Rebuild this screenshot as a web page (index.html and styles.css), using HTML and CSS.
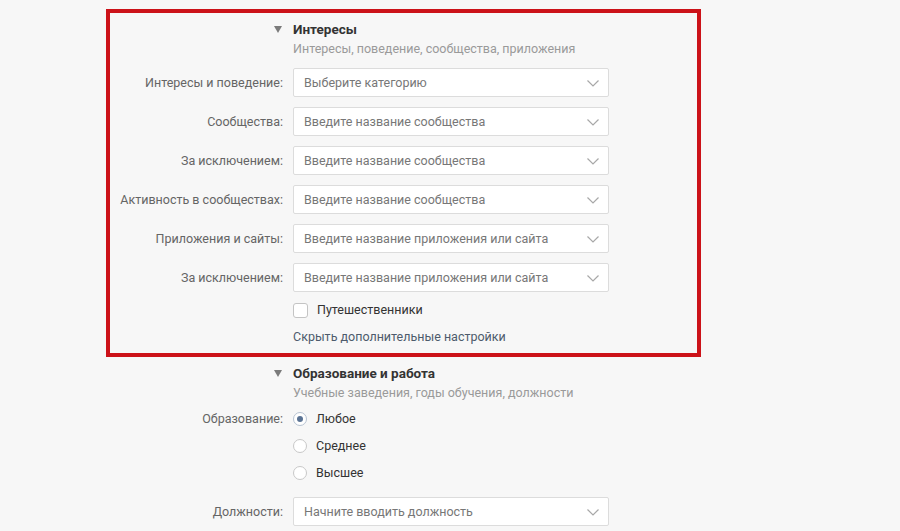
FILE: index.html
```html
<!DOCTYPE html>
<html lang="ru">
<head>
<meta charset="utf-8">
<title>Интересы</title>
<link rel="stylesheet" href="styles.css">
</head>
<body>
<div class="page">
  <section class="block highlight">
    <div class="row head">
      <div class="label"><svg class="tri" width="8" height="7" viewBox="0 0 8 7"><path d="M0 0H8L4 7Z" fill="#7b7b7b"/></svg></div>
      <div class="control">
        <div class="title">Интересы</div>
        <div class="sub">Интересы, поведение, сообщества, приложения</div>
      </div>
    </div>
    <div class="row field">
      <div class="label">Интересы и поведение:</div>
      <div class="control"><div class="select"><span>Выберите категорию</span><svg class="chev" width="12" height="7" viewBox="0 0 12 7"><path d="M0.5 0.5L6 6L11.5 0.5" fill="none" stroke="#a8a8a8" stroke-width="1.2"/></svg></div></div>
    </div>
    <div class="row field">
      <div class="label">Сообщества:</div>
      <div class="control"><div class="select"><span>Введите название сообщества</span><svg class="chev" width="12" height="7" viewBox="0 0 12 7"><path d="M0.5 0.5L6 6L11.5 0.5" fill="none" stroke="#a8a8a8" stroke-width="1.2"/></svg></div></div>
    </div>
    <div class="row field">
      <div class="label">За исключением:</div>
      <div class="control"><div class="select"><span>Введите название сообщества</span><svg class="chev" width="12" height="7" viewBox="0 0 12 7"><path d="M0.5 0.5L6 6L11.5 0.5" fill="none" stroke="#a8a8a8" stroke-width="1.2"/></svg></div></div>
    </div>
    <div class="row field">
      <div class="label">Активность в сообществах:</div>
      <div class="control"><div class="select"><span>Введите название сообщества</span><svg class="chev" width="12" height="7" viewBox="0 0 12 7"><path d="M0.5 0.5L6 6L11.5 0.5" fill="none" stroke="#a8a8a8" stroke-width="1.2"/></svg></div></div>
    </div>
    <div class="row field">
      <div class="label">Приложения и сайты:</div>
      <div class="control"><div class="select"><span>Введите название приложения или сайта</span><svg class="chev" width="12" height="7" viewBox="0 0 12 7"><path d="M0.5 0.5L6 6L11.5 0.5" fill="none" stroke="#a8a8a8" stroke-width="1.2"/></svg></div></div>
    </div>
    <div class="row field">
      <div class="label">За исключением:</div>
      <div class="control"><div class="select"><span>Введите название приложения или сайта</span><svg class="chev" width="12" height="7" viewBox="0 0 12 7"><path d="M0.5 0.5L6 6L11.5 0.5" fill="none" stroke="#a8a8a8" stroke-width="1.2"/></svg></div></div>
    </div>
    <div class="row check">
      <div class="label"></div>
      <div class="control"><span class="box"></span><span class="opt">Путешественники</span></div>
    </div>
    <div class="row linkrow">
      <div class="label"></div>
      <div class="control"><span class="link">Скрыть дополнительные настройки</span></div>
    </div>
  </section>

  <section class="block plain">
    <div class="row head">
      <div class="label"><svg class="tri" width="8" height="7" viewBox="0 0 8 7"><path d="M0 0H8L4 7Z" fill="#7b7b7b"/></svg></div>
      <div class="control">
        <div class="title">Образование и работа</div>
        <div class="sub">Учебные заведения, годы обучения, должности</div>
      </div>
    </div>
    <div class="row radio first">
      <div class="label">Образование:</div>
      <div class="control"><span class="rad on"></span><span class="opt">Любое</span></div>
    </div>
    <div class="row radio">
      <div class="label"></div>
      <div class="control"><span class="rad"></span><span class="opt">Среднее</span></div>
    </div>
    <div class="row radio">
      <div class="label"></div>
      <div class="control"><span class="rad"></span><span class="opt">Высшее</span></div>
    </div>
    <div class="row field job">
      <div class="label">Должности:</div>
      <div class="control"><div class="select"><span>Начните вводить должность</span><svg class="chev" width="12" height="7" viewBox="0 0 12 7"><path d="M0.5 0.5L6 6L11.5 0.5" fill="none" stroke="#a8a8a8" stroke-width="1.2"/></svg></div></div>
    </div>
  </section>
</div>
</body>
</html>
```

FILE: styles.css
```css
* { box-sizing: border-box; }
html, body {
  margin: 0;
  background: #f7f7f7;
}
body {
  font-family: Roboto, "Open Sans", "Liberation Sans", sans-serif;
  font-size: 12.5px;
  color: #333;
  overflow: hidden;
  height: 531px;
}
.page {
  padding: 9px 0 0 106px;
}
.block {
  width: 595px;
  border: 4px solid transparent;
}
.highlight {
  border-color: #cc1219;
  height: 348px;
  padding-top: 7px;
}
.plain {
  border-top: 0;
  margin-top: 7px;
}
.row {
  display: flex;
  align-items: center;
}
.label {
  width: 183px;
  flex: none;
  text-align: right;
  color: #656565;
  padding-right: 10px;
  white-space: nowrap;
  line-height: 18px;
}
.control {
  width: 316px;
  flex: none;
  display: flex;
  align-items: center;
}
.head { align-items: flex-start; }
.head .control { flex-direction: column; align-items: flex-start; }
.head .label { padding-right: 11px; }
.tri { vertical-align: middle; }
.title {
  font-weight: bold;
  font-size: 13.5px;
  color: #333;
  line-height: 18px;
}
.sub {
  color: #9a9a9a;
  line-height: 18px;
  margin-top: 2px;
}
.field { margin-top: 10px; }
.select {
  width: 316px;
  height: 29px;
  background: #fff;
  border: 1px solid #dcdcdc;
  border-radius: 2px;
  display: flex;
  align-items: center;
  justify-content: space-between;
  padding: 0 9px 0 10px;
  color: #777;
}
.chev { flex: none; margin-top: 1px; }
.check { margin-top: 8px; height: 20px; }
.box {
  width: 15px;
  height: 15px;
  border: 1px solid #c4c4c4;
  border-radius: 3px;
  background: #fff;
  flex: none;
}
.opt {
  color: #333;
  margin-left: 9px;
  line-height: 18px;
}
.linkrow { margin-top: 8px; height: 18px; }
.link {
  color: #4d5b6c;
  line-height: 18px;
}
.radio { height: 20px; margin-top: 7px; }
.rad {
  width: 14px;
  height: 14px;
  border: 1px solid #c8c8c8;
  border-radius: 50%;
  background: #fff;
  flex: none;
  position: relative;
}
.rad.on { border-color: #b7c3d2; }
.rad.on::after {
  content: "";
  position: absolute;
  left: 3px;
  top: 3px;
  width: 6px;
  height: 6px;
  border-radius: 50%;
  background: #5a7394;
}
.job { margin-top: 14px; }
```
